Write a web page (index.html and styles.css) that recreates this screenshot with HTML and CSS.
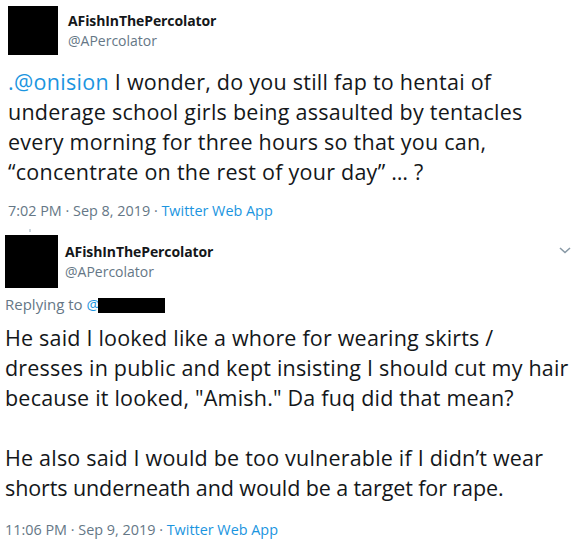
FILE: index.html
```html
<!DOCTYPE html>
<html>
<head>
<meta charset="utf-8">
<link rel="stylesheet" href="styles.css">
</head>
<body>
<div class="tweet first">
  <div class="header">
    <div class="avatar a1"></div>
    <div class="names">
      <div class="name">AFishInThePercolator</div>
      <div class="handle">@APercolator</div>
    </div>
  </div>
  <div class="text t1"><span class="link">.@onision</span> I wonder, do you still fap to hentai of<br>underage school girls being assaulted by tentacles<br>every morning for three hours so that you can,<br>“concentrate on the rest of your day” … ?</div>
  <div class="meta m1">7:02 PM · Sep 8, 2019 · <span class="link">Twitter Web App</span></div>
</div>
<div class="tweet second">
  <div class="thread-dot"></div>
  <div class="header h2">
    <div class="avatar a2"></div>
    <div class="names">
      <div class="name">AFishInThePercolator</div>
      <div class="handle">@APercolator</div>
    </div>
    <svg class="chev" width="12" height="7" viewBox="0 0 12 7"><path d="M1 1 L6 5.5 L11 1" fill="none" stroke="#8899a6" stroke-width="1.6"/></svg>
  </div>
  <div class="replying">Replying to <span class="link">@</span><span class="redact"></span></div>
  <div class="text t2">He said I looked like a whore for wearing skirts /<br>dresses in public and kept insisting I should cut my hair<br>because it looked, "Amish." Da fuq did that mean?<br><br>He also said I would be too vulnerable if I didn’t wear<br><span class="tight">shorts underneath and would be a target for rape.</span></div>
  <div class="meta m2">11:06 PM · Sep 9, 2019 · <span class="link">Twitter Web App</span></div>
</div>
</body>
</html>
```
FILE: styles.css
```css
html, body {
  margin: 0;
  padding: 0;
  background: #fff;
}
body {
  font-family: "Open Sans", "Noto Sans", sans-serif;
  color: #14171a;
  width: 576px;
  height: 544px;
  overflow: hidden;
}
.tweet {
  display: flex;
  flex-direction: column;
}
.first {
  padding: 6px 0 0 8px;
}
.header {
  display: flex;
  align-items: flex-start;
}
.avatar {
  background: #000;
  flex: none;
}
.a1 {
  width: 50px;
  height: 49px;
}
.a2 {
  width: 53px;
  height: 53px;
}
.names {
  display: flex;
  flex-direction: column;
  padding-left: 10px;
}
.name {
  font-weight: 700;
  font-size: 14px;
  line-height: 20px;
  margin-top: 5px;
  letter-spacing: -0.1px;
}
.handle {
  font-size: 14px;
  line-height: 20px;
  color: #657786;
}
.text {
  font-size: 21.5px;
  line-height: 30px;
  letter-spacing: 0.2px;
  width: 568px;
  white-space: nowrap;
}
.t1 .link {
  letter-spacing: 0.3px;
}
.tight {
  letter-spacing: -0.1px;
}
.t1 {
  margin-top: 12px;
  letter-spacing: 0.25px;
}
.link {
  color: #1b95e0;
}
.meta {
  font-size: 14.4px;
  line-height: 20px;
  color: #657786;
}
.m1 {
  margin-top: 14px;
}
.second {
  padding: 0 0 0 5px;
}
.thread-dot {
  width: 2px;
  height: 3px;
  background: #ccd6dd;
  margin: 8px 0 3px 24px;
}
.h2 .names {
  padding-left: 7px;
}
.h2 .name {
  margin-top: 7px;
}
.chev {
  margin-left: auto;
  margin-right: 5px;
  margin-top: 12px;
}
.replying {
  font-size: 15px;
  line-height: 20px;
  color: #657786;
  margin-top: 6px;
}
.redact {
  display: inline-block;
  vertical-align: -3px;
  width: 67px;
  height: 15px;
  margin-left: -2px;
  background: #000;
}
.t2 {
  margin-top: 9px;
}
.m2 {
  margin-top: 17px;
}
```
